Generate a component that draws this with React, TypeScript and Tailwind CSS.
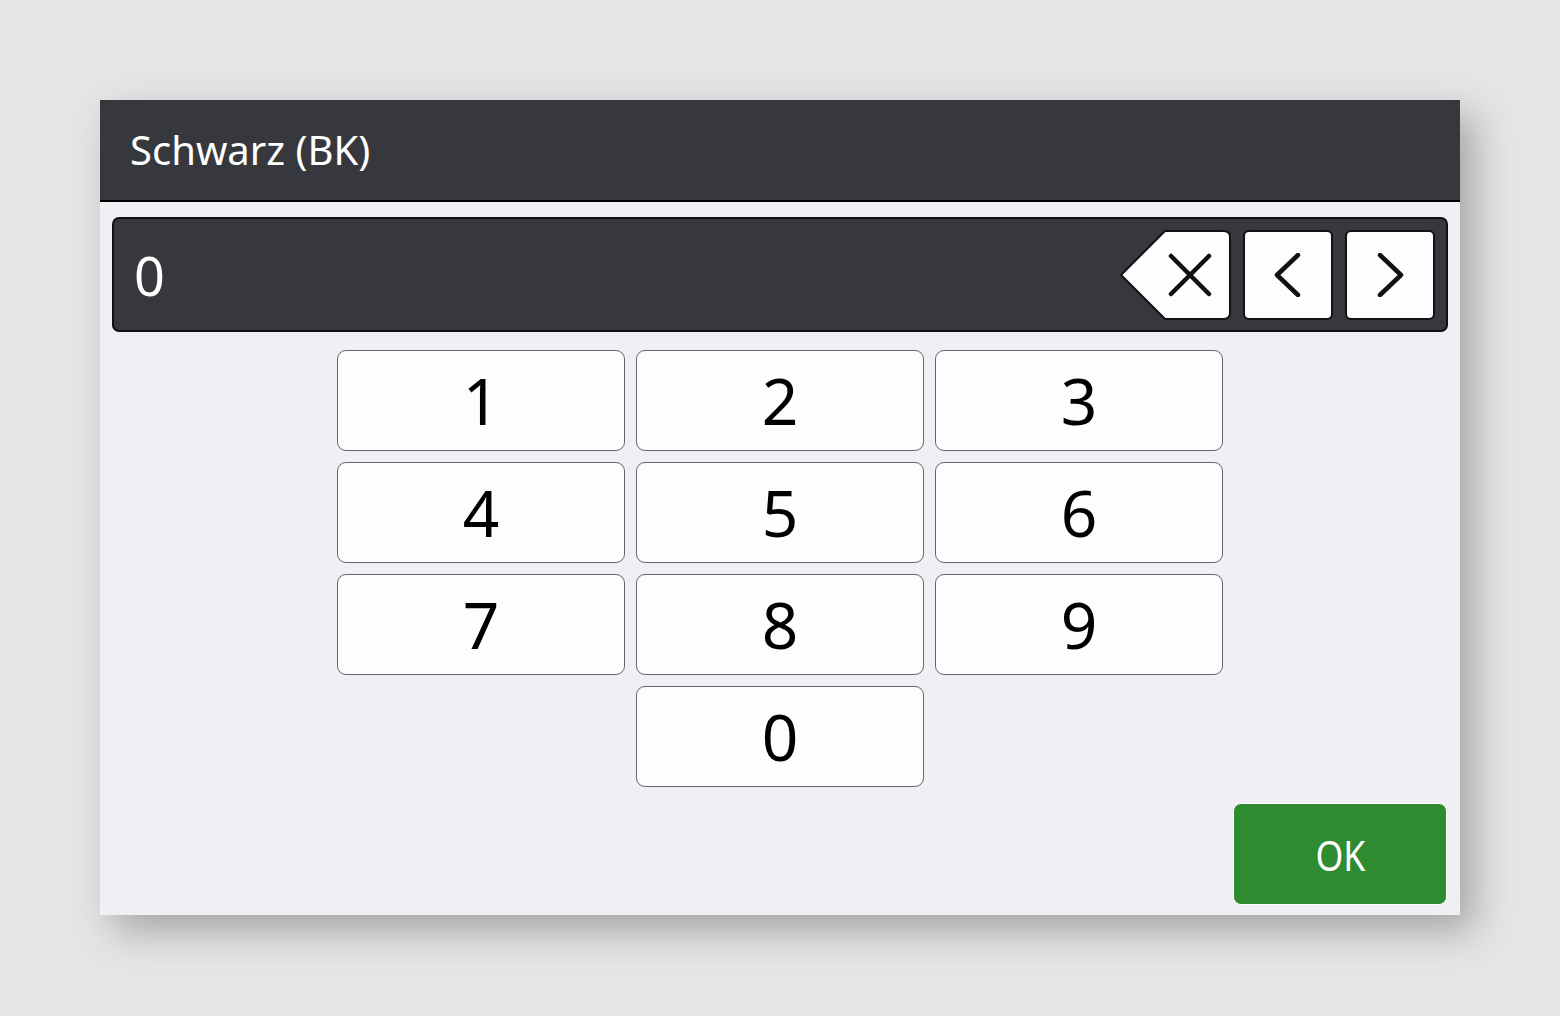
const keys = ["1", "2", "3", "4", "5", "6", "7", "8", "9"];

function KeyButton({ label }: { label: string }) {
  return (
    <button className="h-[101px] w-[288px] rounded-[9px] border-[1.5px] border-[#666] bg-[#fdfcfe] text-[64px] leading-none text-black">
      {label}
    </button>
  );
}

function BackspaceKey() {
  return (
    <button className="relative h-[90px] w-[111px]">
      <svg width="111" height="90" viewBox="0 0 111 90" className="absolute inset-0">
        <path
          d="M45 1 L103 1 Q110 1 110 7 L110 83 Q110 89 103 89 L45 89 L1 45 Z"
          fill="#fdfcfe"
          stroke="#111"
          strokeWidth="2"
          strokeLinejoin="round"
        />
        <path d="M51 26 L89 64 M89 26 L51 64" stroke="#111" strokeWidth="4.5" strokeLinecap="round" />
      </svg>
    </button>
  );
}

function ArrowKey({ dir }: { dir: "left" | "right" }) {
  return (
    <button className="flex h-[90px] w-[90px] items-center justify-center rounded-[6px] border-2 border-[#111] bg-[#fdfcfe]">
      <svg width="40" height="44" viewBox="0 0 40 44">
        {dir === "left" ? (
          <path d="M30 2 L9 22 L30 42" fill="none" stroke="#111" strokeWidth="4.5" strokeLinecap="round" strokeLinejoin="round" />
        ) : (
          <path d="M10 2 L31 22 L10 42" fill="none" stroke="#111" strokeWidth="4.5" strokeLinecap="round" strokeLinejoin="round" />
        )}
      </svg>
    </button>
  );
}

export default function App() {
  return (
    <div className="min-h-screen bg-[#e5e5e5] p-[100px] font-['Noto_Sans',sans-serif]">
      <div className="flex h-[815px] w-[1360px] flex-col bg-[#f0f0f4] shadow-[14px_16px_36px_rgba(0,0,0,0.28)]">
        <div className="flex h-[102px] items-center border-b-2 border-black bg-[#37383d] pl-[30px]">
          <span className="text-[40px] text-white">Schwarz (BK)</span>
        </div>

        <div className="mx-[12px] mt-[15px] flex h-[115px] items-center rounded-[7px] border-2 border-[#111] bg-[#37383d] pl-[20px] pr-[11px]">
          <span className="flex-1 text-[54px] leading-none text-white">0</span>
          <div className="flex items-center gap-[12px]">
            <BackspaceKey />
            <ArrowKey dir="left" />
            <ArrowKey dir="right" />
          </div>
        </div>

        <div className="mt-[18px] flex justify-center">
          <div className="grid grid-cols-[288px_288px_288px] gap-x-[11px] gap-y-[11px]">
            {keys.map((k) => (
              <KeyButton key={k} label={k} />
            ))}
            <div />
            <KeyButton label="0" />
          </div>
        </div>

        <div className="mt-auto flex justify-end pb-[10px] pr-[13px]">
          <button className="h-[102px] w-[214px] rounded-[8px] border border-white bg-[#2e8b2f] text-white">
            <span className="inline-block scale-x-[0.85] text-[42px]">OK</span>
          </button>
        </div>
      </div>
    </div>
  );
}
